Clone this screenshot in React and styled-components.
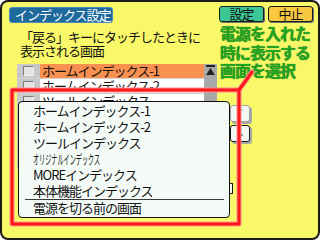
import React from 'react';
import styled, { createGlobalStyle } from 'styled-components';

const GlobalStyle = createGlobalStyle`
  html, body {
    margin: 0;
    padding: 0;
    background: #ffffff;
  }
  body {
    font-family: "Noto Sans CJK JP", "Noto Sans", sans-serif;
  }
`;

const rows = [
  { label: 'ホームインデックス-1', active: true },
  { label: 'ホームインデックス-2' },
  { label: 'ツールインデックス' },
  { label: 'オリジナルインデックス' },
  { label: 'MOREインデックス' },
  { label: '本体機能インデックス' },
  { label: '電源を切る前の画面' },
];

const menuItems = [
  { label: 'ホームインデックス-1' },
  { label: 'ホームインデックス-2' },
  { label: 'ツールインデックス' },
  { label: 'オリジナルインデックス', narrow: true },
  { label: 'MOREインデックス' },
  { label: '本体機能インデックス' },
];

export default function App() {
  return (
    <>
      <GlobalStyle />
      <Frame>
        <Header>
          <Title>インデックス設定</Title>
          <Buttons>
            <HeadButton $bg="#3cc896">設定</HeadButton>
            <HeadButton $bg="#f8c840">中止</HeadButton>
          </Buttons>
        </Header>

        <Body>
          <LeftCol>
            <Prompt>
              「戻る」キーにタッチしたときに
              <br />
              表示される画面
            </Prompt>
            <List>
              <Rows>
                {rows.map((r, i) => (
                  <Row key={i}>
                    <CheckCell>
                      <CheckBox />
                    </CheckCell>
                    <RowLabel $active={r.active}>{r.label}</RowLabel>
                  </Row>
                ))}
              </Rows>
              <ScrollBar>
                <svg width="9" height="11" viewBox="0 0 9 11">
                  <rect x="0" y="0" width="9" height="2" fill="#202020" />
                  <polygon points="4.5,3 9,10 0,10" fill="#202020" />
                </svg>
              </ScrollBar>
            </List>
          </LeftCol>

          <RightCol>
            <Note>
              電源を入れた
              <br />
              時に表示する
              <br />
              画面を選択
            </Note>
            <SideButton $disabled>↑</SideButton>
            <SideButton>↓</SideButton>
            <SmallButton />
          </RightCol>
        </Body>

        <Popup>
          {menuItems.map((m, i) => (
            <MenuItem key={i}>
              {m.narrow ? <Narrow>{m.label}</Narrow> : m.label}
            </MenuItem>
          ))}
          <MenuDivider />
          <MenuItem>電源を切る前の画面</MenuItem>
        </Popup>

        <Callout width="320" height="240" viewBox="0 0 320 240">
          <g fill="none" strokeLinecap="round" strokeLinejoin="round">
            <rect x="12" y="90" width="227" height="134" stroke="#ff9090" strokeWidth="5" />
            <path d="M239 90 L252 72" stroke="#ff9090" strokeWidth="5" />
            <rect x="12" y="90" width="227" height="134" stroke="#ff1818" strokeWidth="3" />
            <path d="M239 90 L252 72" stroke="#ff1818" strokeWidth="3" />
          </g>
        </Callout>
      </Frame>
    </>
  );
}

const Frame = styled.div`
  position: relative;
  box-sizing: border-box;
  width: 320px;
  height: 240px;
  padding: 4px 5px 0 7px;
  border: 2px solid #1a1a1a;
  border-radius: 8px;
  background: #f8f868;
  overflow: hidden;
`;

const Header = styled.div`
  display: flex;
  justify-content: space-between;
  align-items: flex-start;
  height: 17px;
`;

const Title = styled.div`
  box-sizing: border-box;
  margin-top: 1px;
  height: 16px;
  padding: 0 1px 0 5px;
  border: 1px solid #4a8cc0;
  border-radius: 3px;
  background: #1f6a9c;
  color: #ffffff;
  font-size: 13px;
  line-height: 14px;
  letter-spacing: -1px;
  white-space: nowrap;
`;

const Buttons = styled.div`
  display: flex;
  gap: 4px;
`;

const HeadButton = styled.div`
  box-sizing: border-box;
  width: 45px;
  height: 16px;
  border: 1px solid #102018;
  border-radius: 3px;
  background: ${(p) => p.$bg};
  box-shadow: 1px 1px 0 #707070;
  color: #111111;
  font-size: 13px;
  line-height: 14px;
  letter-spacing: -1px;
  text-align: center;
`;

const Body = styled.div`
  display: flex;
  gap: 2px;
`;

const LeftCol = styled.div`
  width: 201px;
  margin-left: 8px;
`;

const Prompt = styled.div`
  margin-top: 7px;
  padding-left: 3px;
  color: #111111;
  font-size: 13px;
  line-height: 14px;
  letter-spacing: -1px;
  white-space: nowrap;
`;

const List = styled.div`
  display: flex;
  margin-top: 6px;
  width: 200px;
`;

const Rows = styled.div`
  flex: 1;
`;

const Row = styled.div`
  display: flex;
  height: 14px;
  border-bottom: 1px solid #d4d4d4;
`;

const CheckCell = styled.div`
  display: flex;
  align-items: center;
  justify-content: center;
  width: 23px;
  background: #c8c8c8;
`;

const CheckBox = styled.div`
  box-sizing: border-box;
  width: 11px;
  height: 10px;
  border: 1px solid #7a7a7a;
  border-right-color: #f0f0f0;
  border-bottom-color: #f0f0f0;
  background: #e4e4e4;
`;

const RowLabel = styled.div`
  flex: 1;
  padding-left: 2px;
  background: ${(p) => (p.$active ? '#f89050' : '#ffffff')};
  color: #111111;
  font-size: 13px;
  line-height: 14px;
  letter-spacing: -1px;
  white-space: nowrap;
`;

const ScrollBar = styled.div`
  display: flex;
  justify-content: center;
  width: 13px;
  padding-top: 1px;
  background: #a8a8a8;
`;

const RightCol = styled.div`
  display: flex;
  flex-direction: column;
  align-items: flex-start;
`;

const Note = styled.div`
  margin-top: 1px;
  color: #22a422;
  font-size: 16px;
  font-weight: 700;
  line-height: 18.5px;
  letter-spacing: -1px;
  white-space: nowrap;
  text-shadow: 0 0 1px #0e600e;
`;

const SideButton = styled.div`
  box-sizing: border-box;
  width: 20px;
  height: 17px;
  margin: 25px 0 0 10px;
  & + & {
    margin-top: 3px;
  }
  border: 1px solid ${(p) => (p.$disabled ? '#a0a0a0' : '#1a1a1a')};
  border-radius: 3px;
  background: #f4f8f4;
  box-shadow: 2px 2px 0 #a8a8a8;
  color: ${(p) => (p.$disabled ? '#a0a0a0' : '#111111')};
  font-family: "DejaVu Sans", sans-serif;
  font-size: 12px;
  line-height: 15px;
  text-align: center;
`;

const SmallButton = styled.div`
  box-sizing: border-box;
  width: 13px;
  height: 11px;
  margin-top: 41px;
  border: 1px solid #1a1a1a;
  background: #f8f8f0;
`;

const Popup = styled.div`
  position: absolute;
  left: 16px;
  top: 99px;
  box-sizing: border-box;
  width: 212px;
  height: 117px;
  padding-top: 1px;
  border: 1px solid #111111;
  border-radius: 4px;
  background: #f4fbf7;
`;

const MenuItem = styled.div`
  height: 16px;
  padding-left: 14px;
  color: #111111;
  font-size: 13px;
  line-height: 16px;
  letter-spacing: -1px;
  white-space: nowrap;
`;

const Narrow = styled.span`
  display: inline-block;
  font-size: 13px;
  letter-spacing: 0;
  transform: scaleX(0.47);
  transform-origin: left center;
`;

const MenuDivider = styled.div`
  height: 1px;
  margin: 0 5px 0 6px;
  background: #3a3a3a;
`;

const Callout = styled.svg`
  position: absolute;
  left: -2px;
  top: -2px;
  pointer-events: none;
`;
